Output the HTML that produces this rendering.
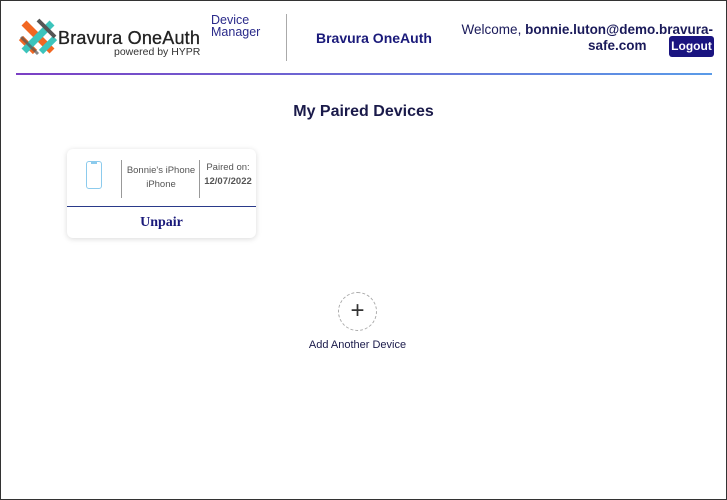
<!DOCTYPE html>
<html><head><style>
body{margin:0;width:727px;height:500px;overflow:hidden;font-family:"Liberation Sans",sans-serif;background:#fff}
.frame{position:absolute;left:0;top:0;width:725px;height:498px;border:1px solid #333}
.abs{position:absolute;white-space:nowrap}
</style></head><body>
<div class="frame"></div>
<svg class="abs" style="left:18px;top:17px" width="40" height="40" viewBox="0 0 40 40">
<g stroke-linecap="butt">
<line x1="6" y1="6" x2="20" y2="20" stroke="#f26722" stroke-width="7"/>
<line x1="20" y1="20" x2="34" y2="34" stroke="#f26722" stroke-width="7"/>
<line x1="3" y1="21" x2="17" y2="35" stroke="#f26722" stroke-width="6"/>
<line x1="34" y1="6" x2="6" y2="34" stroke="#3cc4bc" stroke-width="7"/>
<line x1="37" y1="21" x2="23" y2="35" stroke="#3cc4bc" stroke-width="6"/>
<line x1="20" y1="3" x2="37" y2="20" stroke="#555" stroke-width="4"/>
<line x1="3" y1="20" x2="20" y2="37" stroke="#555" stroke-width="3" opacity=".7"/>
</g></svg>
<div class="abs" style="left:58px;top:28px;font-size:18px;color:#222;-webkit-text-stroke:0.3px #222;letter-spacing:0.2px">Bravura OneAuth</div>
<div class="abs" style="left:114px;top:46px;font-size:10.5px;color:#333">powered by HYPR</div>
<div class="abs" style="left:211px;top:14px;font-size:12.5px;color:#2a2a8a;line-height:12px">Device<br>Manager</div>
<div class="abs" style="left:286px;top:14px;width:1px;height:47px;background:#aaa"></div>
<div class="abs" style="left:316px;top:30px;font-size:14px;font-weight:bold;color:#1a1a7a">Bravura OneAuth</div>
<div class="abs" style="right:14px;top:21px;font-size:13.5px;color:#1a1a5a;text-align:right;line-height:18px">Welcome, <b>bonnie.luton@demo.bravura-</b></div>
<div class="abs" style="left:588px;top:38px;font-size:13.5px;font-weight:bold;color:#1a1a5a">safe.com</div>
<div class="abs" style="left:669px;top:36px;width:45px;height:21px;background:#1a1480;border-radius:3px;color:#fff;font-size:12px;font-weight:bold;text-align:center;line-height:21px">Logout</div>
<div class="abs" style="left:16px;top:73px;width:696px;height:2px;background:linear-gradient(90deg,#7b3fc4,#5a9be8)"></div>
<div class="abs" style="left:0;width:727px;top:103px;text-align:center;font-size:16px;font-weight:bold;color:#1a1a4a">My Paired Devices</div>
<div class="abs" style="left:67px;top:149px;width:189px;height:89px;background:#fff;border-radius:6px;box-shadow:0 1px 6px rgba(0,0,0,.15)">
 <div class="abs" style="left:19px;top:12px;width:14px;height:26px;border:1.5px solid #8ccbed;border-radius:3px"></div>
 <div class="abs" style="left:24px;top:13px;width:6px;height:1.5px;background:#8ccbed"></div>
 <div class="abs" style="left:54px;top:11px;width:1px;height:38px;background:#999"></div>
 <div class="abs" style="left:55px;top:15px;width:78px;text-align:center;font-size:9.5px;color:#555;line-height:14px">Bonnie's iPhone<br>iPhone</div>
 <div class="abs" style="left:132px;top:11px;width:1px;height:38px;background:#999"></div>
 <div class="abs" style="left:133px;top:12px;width:56px;text-align:center;font-size:9.5px;color:#555;line-height:14px">Paired on:<br><b>12/07/2022</b></div>
 <div class="abs" style="left:0;top:57px;width:189px;height:1px;background:#2a3a8a"></div>
 <div class="abs" style="left:0;top:66px;width:189px;text-align:center;font-family:'Liberation Serif',serif;font-weight:bold;font-size:14px;color:#1a1a7a">Unpair</div>
</div>
<div class="abs" style="left:338px;top:292px;width:37px;height:37px;border:1px dashed #aaa;border-radius:50%;text-align:center;line-height:36px;font-size:24px;color:#333">+</div>
<div class="abs" style="left:0;width:715px;top:339px;text-align:center;font-size:11px;color:#1a1a4a">Add Another Device</div>
</body></html>
